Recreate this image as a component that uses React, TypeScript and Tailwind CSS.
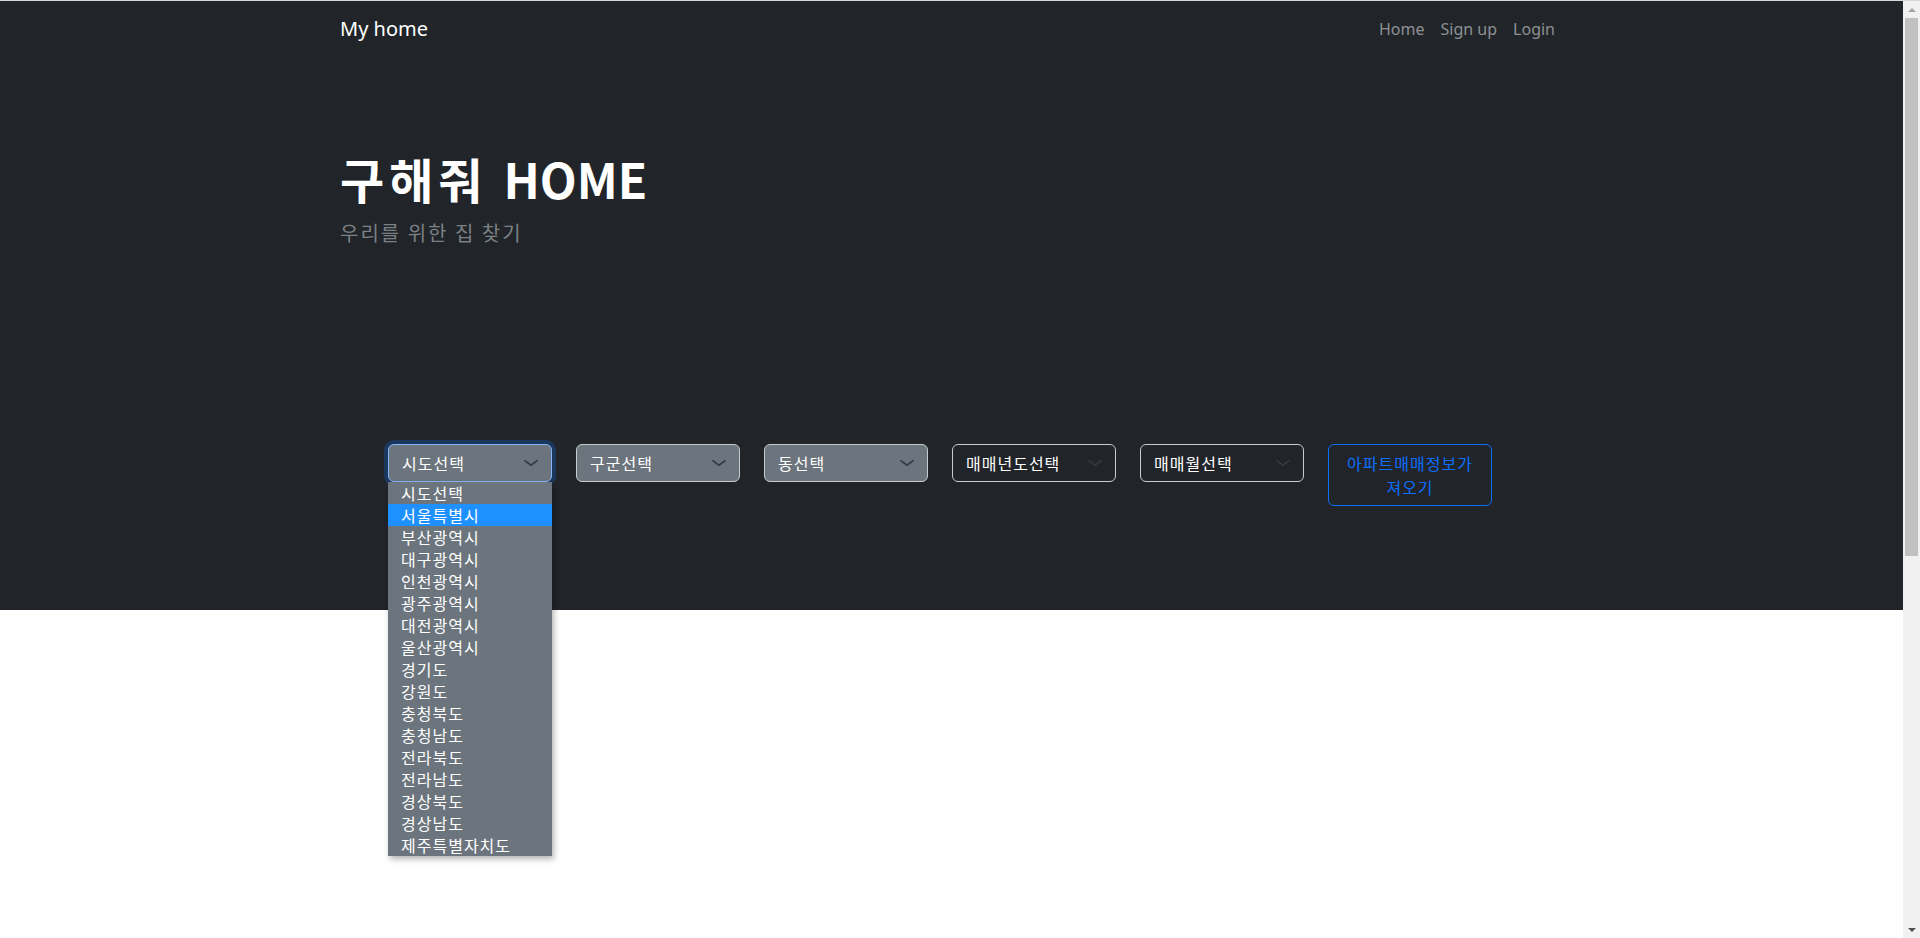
import React from 'react';

const sidoList = [
  '시도선택',
  '서울특별시',
  '부산광역시',
  '대구광역시',
  '인천광역시',
  '광주광역시',
  '대전광역시',
  '울산광역시',
  '경기도',
  '강원도',
  '충청북도',
  '충청남도',
  '전라북도',
  '전라남도',
  '경상북도',
  '경상남도',
  '제주특별자치도',
];

const Chevron = () => (
  <svg viewBox="0 0 16 16" className="w-4 h-3" fill="none" stroke="#343a40" strokeLinecap="round" strokeLinejoin="round" strokeWidth="2" preserveAspectRatio="none">
    <path d="m2 5 6 6 6-6" />
  </svg>
);

type SelectProps = {
  label: string;
  dark?: boolean;
  focused?: boolean;
};

const FakeSelect = ({ label, dark, focused }: SelectProps) => {
  return (
    <div
      className={
        'flex items-center justify-between w-[164px] h-[38px] pl-[13px] pr-[12px] rounded-[6px] border text-white text-[16px] ' +
        (dark ? 'bg-[#212529] border-[#c8cbce]' : 'bg-[#6c757d] border-[#c8cbce]') +
        (focused ? ' !border-[#86b7fe] shadow-[0_0_0_4px_rgba(13,110,253,0.25)]' : '')
      }
    >
      <span className="leading-[24px]">{label}</span>
      <Chevron />
    </div>
  );
};

export default function App() {
  return (
    <div className="flex h-[938px] overflow-hidden border-t border-[#d9d9d9] font-['Noto_Sans','Noto_Sans_CJK_KR',sans-serif]">
      <div className="flex-1 bg-white">
        <div className="bg-[#212529] h-[609px]">
          {/* navbar */}
          <nav className="mx-auto w-[1247px] px-3 h-[56px] flex items-center justify-between">
            <span className="text-white text-[20px] leading-[30px]">My home</span>
            <ul className="flex text-[16px] leading-[24px] text-[#8e9093]">
              <li className="px-2">Home</li>
              <li className="px-2">Sign up</li>
              <li className="px-2">Login</li>
            </ul>
          </nav>

          <div className="mx-auto w-[1247px] px-3 pt-[92px]">
            <h1 className="text-white text-[48px] font-bold leading-[58px] font-['Noto_Sans_CJK_KR','Noto_Sans',sans-serif]">
              <span className="tracking-[5px]">구해줘 </span>HOME
            </h1>
            <p className="text-[#7b8085] text-[20px] leading-[30px] mt-[11px] tracking-[2px] font-['Noto_Sans_CJK_KR',sans-serif]">우리를 위한 집 찾기</p>
          </div>

          <div className="ml-[388px] mt-[196px] flex gap-[24px] items-start tracking-[1px] font-['Noto_Sans_CJK_KR',sans-serif]">
            <div className="relative">
              <FakeSelect label="시도선택" focused />
              <ul className="absolute left-0 top-[38px] w-[164px] bg-[#6c757d] text-white text-[16px] shadow-[2px_3px_6px_rgba(0,0,0,0.3)] z-10">
                {sidoList.map((s) => (
                  <li
                    key={s}
                    className={'h-[22px] leading-[22px] pl-[13px] ' + (s === '서울특별시' ? 'bg-[#1e90ff]' : '')}
                  >
                    {s}
                  </li>
                ))}
              </ul>
            </div>
            <FakeSelect label="구군선택" />
            <FakeSelect label="동선택" />
            <FakeSelect label="매매년도선택" dark />
            <FakeSelect label="매매월선택" dark />
            <button
              type="button"
              className="w-[164px] px-3 py-[6px] rounded-[6px] border border-[#0d6efd] text-[#0d6efd] text-[16px] leading-[24px] text-center"
            >
              아파트매매정보가져오기
            </button>
          </div>
        </div>
      </div>

      {/* scrollbar */}
      <div className="w-[17px] bg-[#f1f1f1] flex flex-col items-center">
        <div className="h-[17px] flex items-center justify-center">
          <div className="w-0 h-0 border-l-[4px] border-r-[4px] border-b-[4px] border-l-transparent border-r-transparent border-b-[#a3a3a3]" />
        </div>
        <div className="w-[13px] h-[538px] bg-[#c1c1c1]" />
        <div className="flex-1" />
        <div className="h-[17px] flex items-center justify-center">
          <div className="w-0 h-0 border-l-[4px] border-r-[4px] border-t-[4px] border-l-transparent border-r-transparent border-t-[#505050]" />
        </div>
      </div>
    </div>
  );
}
